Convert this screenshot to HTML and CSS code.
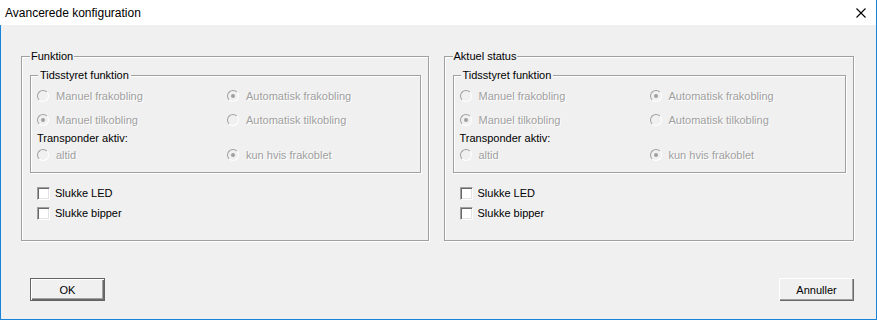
FILE: index.html
```html
<!DOCTYPE html>
<html lang="da">
<head>
<meta charset="utf-8">
<title>Avancerede konfiguration</title>
<link rel="stylesheet" href="styles.css">
</head>
<body>
<div class="window">
  <div class="titlebar">
    <span class="title">Avancerede konfiguration</span>
    <span class="close" aria-label="Luk">
      <svg width="10" height="10" viewBox="0 0 10 10"><path d="M0.5 0.5 L9.5 9.5 M9.5 0.5 L0.5 9.5" stroke="#000" stroke-width="1.1" fill="none"/></svg>
    </span>
  </div>
  <div class="content">
    <div class="groups">
      <fieldset class="group group-left">
        <legend>Funktion</legend>
        <fieldset class="inner">
          <legend>Tidsstyret funktion</legend>
          <div class="opts">
            <div class="opt row1"><span class="radio"></span><span class="dis">Manuel frakobling</span></div>
            <div class="opt row1"><span class="radio checked"></span><span class="dis">Automatisk frakobling</span></div>
            <div class="opt row2"><span class="radio checked"></span><span class="dis">Manuel tilkobling</span></div>
            <div class="opt row2"><span class="radio"></span><span class="dis">Automatisk tilkobling</span></div>
            <div class="label">Transponder aktiv:</div>
            <div class="opt"><span class="radio"></span><span class="dis">altid</span></div>
            <div class="opt"><span class="radio checked"></span><span class="dis">kun hvis frakoblet</span></div>
          </div>
        </fieldset>
        <div class="checks">
          <div class="check"><span class="box"></span><span>Slukke LED</span></div>
          <div class="check"><span class="box"></span><span>Slukke bipper</span></div>
        </div>
      </fieldset>
      <fieldset class="group group-right">
        <legend>Aktuel status</legend>
        <fieldset class="inner">
          <legend>Tidsstyret funktion</legend>
          <div class="opts">
            <div class="opt row1"><span class="radio"></span><span class="dis">Manuel frakobling</span></div>
            <div class="opt row1"><span class="radio checked"></span><span class="dis">Automatisk frakobling</span></div>
            <div class="opt row2"><span class="radio checked"></span><span class="dis">Manuel tilkobling</span></div>
            <div class="opt row2"><span class="radio"></span><span class="dis">Automatisk tilkobling</span></div>
            <div class="label">Transponder aktiv:</div>
            <div class="opt"><span class="radio"></span><span class="dis">altid</span></div>
            <div class="opt"><span class="radio checked"></span><span class="dis">kun hvis frakoblet</span></div>
          </div>
        </fieldset>
        <div class="checks">
          <div class="check"><span class="box"></span><span>Slukke LED</span></div>
          <div class="check"><span class="box"></span><span>Slukke bipper</span></div>
        </div>
      </fieldset>
    </div>
    <div class="footer">
      <button class="btn btn-default">OK</button>
      <button class="btn">Annuller</button>
    </div>
  </div>
</div>
</body>
</html>
```
FILE: styles.css
```css
* { box-sizing: border-box; }
html, body { margin: 0; padding: 0; background: #f0f0f0; }
.window {
  width: 877px;
  height: 320px;
  background: #f0f0f0;
  border: 1px solid #1883d7;
  border-top: none;
  display: flex;
  flex-direction: column;
  font-family: "Liberation Sans", Arial, sans-serif;
  font-size: 11px;
  color: #000;
}
.titlebar {
  height: 25px;
  background: #fff;
  display: flex;
  align-items: center;
  justify-content: space-between;
  padding: 0 10px 0 5px;
  margin: 0 -1px 0 -1px;
  border-right: 1px solid #1883d7;
}
.title {
  font-family: "Liberation Sans", Arial, sans-serif;
  font-size: 12px;
  color: #000;
}
.close { display: flex; width: 10px; height: 10px; }
.content {
  flex: 1;
  padding: 25px 22px 0 20px;
  display: flex;
  flex-direction: column;
}
.groups {
  display: flex;
  gap: 15px;
}
fieldset {
  margin: 0;
  border: 1px solid #a0a0a0;
  box-shadow: 1px 1px 0 #fff, inset 1px 1px 0 #fff;
}
legend {
  line-height: 13px;
  padding: 0 1px;
  background: #f0f0f0;
}
.group {
  padding: 0 7px 17px 8px;
}
.group-left { width: 409px; }
.group-right { width: 412px; }
.inner {
  margin-top: 6px;
  padding: 4px 6px 7px 6px;
}
.inner legend { padding: 0 2px 0 2px; margin-left: 1px; }
.opts {
  display: grid;
  grid-template-columns: 190px 1fr;
}
.opt {
  height: 20px;
  display: flex;
  align-items: center;
  line-height: 13px;
}
.opt.row2 { margin-top: 4px; }
.label {
  grid-column: 1 / -1;
  line-height: 13px;
  height: 13px;
  margin-top: 2px;
}
.dis {
  color: #a0a0a0;
  text-shadow: 1px 1px 0 #fff;
}
.radio {
  width: 12px;
  height: 12px;
  border-radius: 50%;
  border: 1px solid;
  border-color: #a0a0a0 #fff #fff #a0a0a0;
  background: #f0f0f0;
  margin-right: 7px;
  display: flex;
  align-items: center;
  justify-content: center;
  flex: none;
}
.radio.checked::after {
  content: "";
  width: 4px;
  height: 4px;
  border-radius: 50%;
  background: #a0a0a0;
}
.checks {
  margin-top: 10px;
  padding-left: 7px;
}
.check {
  height: 20px;
  display: flex;
  align-items: center;
  line-height: 13px;
}
.box {
  width: 13px;
  height: 13px;
  border: 1px solid;
  border-color: #a0a0a0 #fff #fff #a0a0a0;
  background: #fff;
  box-shadow: inset 1px 1px 0 #696969, inset -1px -1px 0 #e3e3e3;
  margin-right: 5px;
  flex: none;
}
.footer {
  margin-top: 37px;
  display: flex;
  justify-content: space-between;
  padding-left: 9px;
}
.btn {
  width: 75px;
  height: 23px;
  font-family: "Liberation Sans", Arial, sans-serif;
  font-size: 11px;
  color: #000;
  background: #f0f0f0;
  border: none;
  padding: 0;
  box-shadow: inset 1px 1px 0 #fff, inset -1px -1px 0 #696969, inset -2px -2px 0 #a0a0a0;
}
.btn-default {
  border: 1px solid #646464;
  box-shadow: inset 1px 1px 0 #fff, inset -1px -1px 0 #696969, inset -2px -2px 0 #a0a0a0;
}
```
